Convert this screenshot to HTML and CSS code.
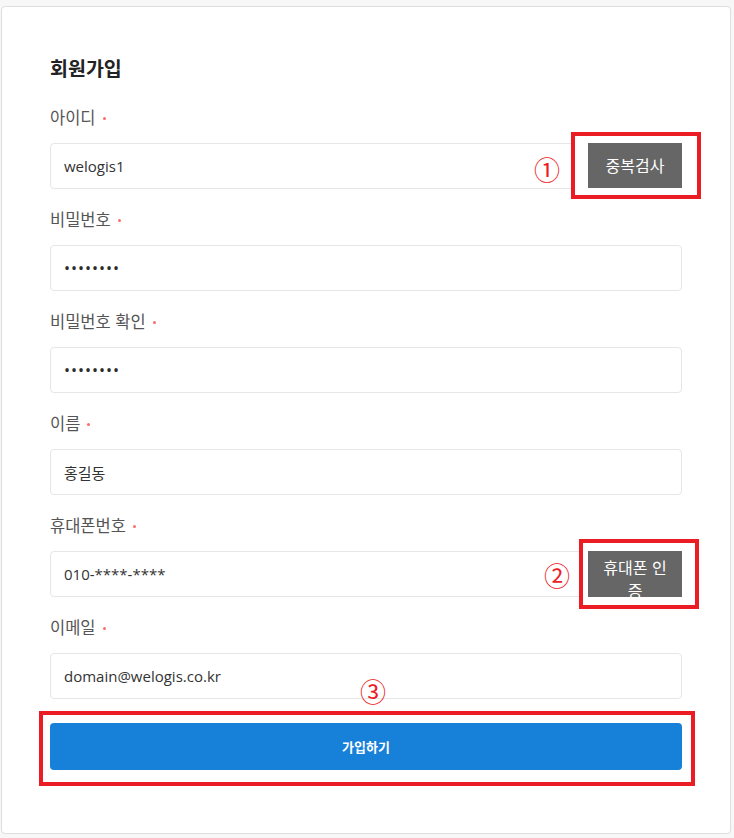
FILE: index.html
```html
<!DOCTYPE html>
<html lang="ko">
<head>
<meta charset="utf-8">
<title>회원가입</title>
<link rel="stylesheet" href="styles.css">
</head>
<body>
<div class="card">
  <h1 class="title">회원가입</h1>
  <form class="form">
    <div class="field">
      <label class="label">아이디<span class="req"></span></label>
      <div class="input-wrap">
        <input class="input" type="text" value="welogis1">
        <button type="button" class="side-btn side-btn-short">중복검사</button>
      </div>
    </div>
    <div class="field">
      <label class="label">비밀번호<span class="req"></span></label>
      <input class="input input-pw" type="password" value="12345678">
    </div>
    <div class="field">
      <label class="label">비밀번호 확인<span class="req"></span></label>
      <input class="input input-pw" type="password" value="12345678">
    </div>
    <div class="field">
      <label class="label">이름<span class="req"></span></label>
      <input class="input" type="text" value="홍길동">
    </div>
    <div class="field">
      <label class="label">휴대폰번호<span class="req"></span></label>
      <div class="input-wrap">
        <input class="input" type="text" value="010-****-****">
        <button type="button" class="side-btn">휴대폰 인증</button>
      </div>
    </div>
    <div class="field">
      <label class="label">이메일<span class="req"></span></label>
      <input class="input" type="text" value="domain@welogis.co.kr">
    </div>
    <button type="button" class="submit">가입하기</button>
  </form>
</div>

<div class="annot annot-1"></div>
<div class="annot annot-2"></div>
<div class="annot annot-3"></div>
<span class="num num-1">①</span>
<span class="num num-2">②</span>
<span class="num num-3">③</span>
</body>
</html>
```

FILE: styles.css
```css
html, body {
  margin: 0;
  padding: 0;
}

body {
  background: #f7f7f7;
  font-family: "Open Sans", "Noto Sans CJK KR", sans-serif;
  width: 734px;
  height: 838px;
  overflow: hidden;
}

.card {
  box-sizing: border-box;
  width: 730px;
  margin: 6px 0 0 1px;
  padding: 47px 48px 63px;
  background: #ffffff;
  border: 1px solid #dedede;
  border-radius: 4px;
}

.title {
  margin: 0 0 24px;
  font-family: "Noto Sans CJK KR", sans-serif;
  font-size: 19.5px;
  line-height: 28px;
  font-weight: 700;
  color: #222;
}

.form {
  display: flex;
  flex-direction: column;
  gap: 19px;
}

.field {
  display: flex;
  flex-direction: column;
  gap: 15px;
}

.label {
  display: flex;
  align-items: center;
  font-family: "Noto Sans CJK KR", sans-serif;
  font-size: 16.5px;
  line-height: 22px;
  height: 22px;
  color: #555;
}

.req {
  width: 3px;
  height: 3px;
  border-radius: 50%;
  background: #ff6b6b;
  margin: 3px 0 0 7px;
}

.input-wrap {
  position: relative;
}

.input {
  display: block;
  box-sizing: border-box;
  width: 100%;
  height: 46px;
  margin: 0;
  padding: 0 13px;
  border: 1px solid #e6e6e6;
  border-radius: 4px;
  background: #fff;
  font-family: "Open Sans", "Noto Sans CJK KR", sans-serif;
  font-size: 15px;
  color: #333;
  outline: none;
}

.input-pw {
  font-size: 16px;
  letter-spacing: 1px;
  color: #2b2b2b;
}

.side-btn {
  position: absolute;
  top: 0;
  right: 0;
  z-index: 3;
  box-sizing: border-box;
  width: 94px;
  height: 46px;
  padding: 5px 10px;
  border: 0;
  border-radius: 0;
  background: #666;
  color: #fff;
  font-family: "Noto Sans CJK KR", sans-serif;
  font-size: 16px;
  line-height: 23px;
  overflow: hidden;
}

.side-btn-short {
  height: 45px;
}

.submit {
  margin-top: 5px;
  height: 47px;
  border: 0;
  border-radius: 4px;
  background: #1780d9;
  color: #fff;
  font-family: "Noto Sans CJK KR", sans-serif;
  font-size: 13px;
  font-weight: 700;
  position: relative;
  z-index: 3;
}

.annot {
  position: absolute;
  box-sizing: border-box;
  border: 4px solid #ec1c24;
  z-index: 2;
}

.annot-1 {
  left: 571px;
  top: 132px;
  width: 130px;
  height: 67px;
  background: #fff;
}

.annot-2 {
  left: 579px;
  top: 539px;
  width: 120px;
  height: 70px;
  background: #fff;
}

.annot-3 {
  left: 39px;
  top: 711px;
  width: 656px;
  height: 75px;
}

.num {
  position: absolute;
  z-index: 4;
  width: 30px;
  height: 30px;
  display: flex;
  align-items: center;
  justify-content: center;
  font-family: "Noto Sans CJK JP", sans-serif;
  font-size: 26px;
  line-height: 30px;
  color: #ec1c24;
}

.num-1 { left: 532px; top: 154px; }
.num-2 { left: 542px; top: 560px; }
.num-3 { left: 358px; top: 676px; }
```
